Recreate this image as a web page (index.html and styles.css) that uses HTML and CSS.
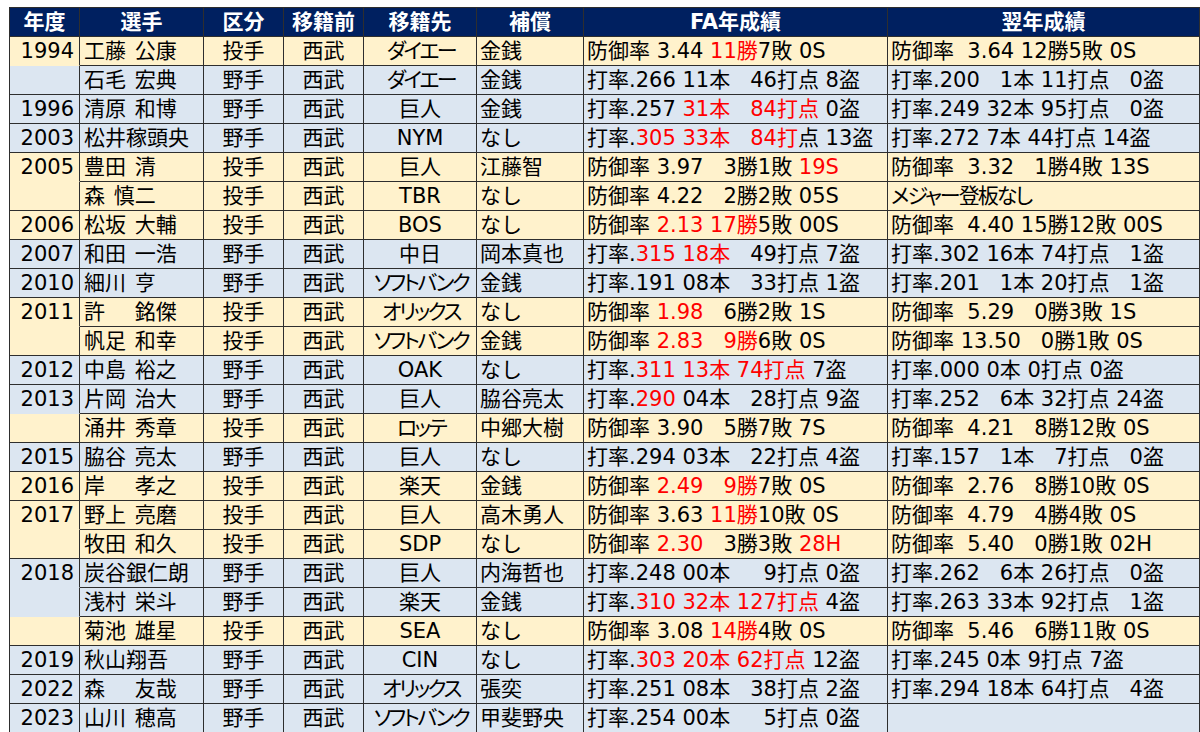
FILE: index.html
```html
<!DOCTYPE html>
<html lang="ja">
<head>
<meta charset="utf-8">
<title>西武 FA移籍選手一覧</title>
<link rel="stylesheet" href="styles.css">
</head>
<body>
<div class="sheet">
<div class="row head"><div class="cell">年度</div><div class="cell">選手</div><div class="cell">区分</div><div class="cell">移籍前</div><div class="cell">移籍先</div><div class="cell">補償</div><div class="cell">FA年成績</div><div class="cell">翌年成績</div></div>
<div class="row p"><div class="cell yr open">1994</div><div class="cell nm">工藤 公康</div><div class="cell ct">投手</div><div class="cell ct">西武</div><div class="cell ct kana">ダイエー</div><div class="cell">金銭</div><div class="cell">防御率 3.44 <span class="r">11勝</span>7敗 0S</div><div class="cell">防御率  3.64 12勝5敗 0S</div></div>
<div class="row b"><div class="cell yr"></div><div class="cell nm">石毛 宏典</div><div class="cell ct">野手</div><div class="cell ct">西武</div><div class="cell ct kana">ダイエー</div><div class="cell">金銭</div><div class="cell">打率.266 11本   46打点 8盗</div><div class="cell">打率.200   1本 11打点   0盗</div></div>
<div class="row b"><div class="cell yr">1996</div><div class="cell nm">清原 和博</div><div class="cell ct">野手</div><div class="cell ct">西武</div><div class="cell ct">巨人</div><div class="cell">金銭</div><div class="cell">打率.257 <span class="r">31本</span>   <span class="r">84打点</span> 0盗</div><div class="cell">打率.249 32本 95打点   0盗</div></div>
<div class="row b"><div class="cell yr">2003</div><div class="cell nm">松井稼頭央</div><div class="cell ct">野手</div><div class="cell ct">西武</div><div class="cell ct">NYM</div><div class="cell">なし</div><div class="cell">打率.<span class="r">305 33本</span>   <span class="r">84打</span>点 13盗</div><div class="cell">打率.272 7本 44打点 14盗</div></div>
<div class="row p"><div class="cell yr open">2005</div><div class="cell nm">豊田 清</div><div class="cell ct">投手</div><div class="cell ct">西武</div><div class="cell ct">巨人</div><div class="cell">江藤智</div><div class="cell">防御率 3.97   3勝1敗 <span class="r">19S</span></div><div class="cell">防御率  3.32   1勝4敗 13S</div></div>
<div class="row p"><div class="cell yr"></div><div class="cell nm">森 慎二</div><div class="cell ct">投手</div><div class="cell ct">西武</div><div class="cell ct">TBR</div><div class="cell">なし</div><div class="cell">防御率 4.22   2勝2敗 05S</div><div class="cell note">メジャー登板なし</div></div>
<div class="row p"><div class="cell yr">2006</div><div class="cell nm">松坂 大輔</div><div class="cell ct">投手</div><div class="cell ct">西武</div><div class="cell ct">BOS</div><div class="cell">なし</div><div class="cell">防御率 <span class="r">2.13 17勝</span>5敗 00S</div><div class="cell">防御率  4.40 15勝12敗 00S</div></div>
<div class="row b"><div class="cell yr">2007</div><div class="cell nm">和田 一浩</div><div class="cell ct">野手</div><div class="cell ct">西武</div><div class="cell ct">中日</div><div class="cell">岡本真也</div><div class="cell">打率.<span class="r">315 18本</span>   49打点 7盗</div><div class="cell">打率.302 16本 74打点   1盗</div></div>
<div class="row b"><div class="cell yr">2010</div><div class="cell nm">細川 亨</div><div class="cell ct">野手</div><div class="cell ct">西武</div><div class="cell ct kana">ソフトバンク</div><div class="cell">金銭</div><div class="cell">打率.191 08本   33打点 1盗</div><div class="cell">打率.201   1本 20打点   1盗</div></div>
<div class="row p"><div class="cell yr open">2011</div><div class="cell nm">許　 銘傑</div><div class="cell ct">投手</div><div class="cell ct">西武</div><div class="cell ct kana">オリックス</div><div class="cell">なし</div><div class="cell">防御率 <span class="r">1.98</span>   6勝2敗 1S</div><div class="cell">防御率  5.29   0勝3敗 1S</div></div>
<div class="row p"><div class="cell yr"></div><div class="cell nm">帆足 和幸</div><div class="cell ct">投手</div><div class="cell ct">西武</div><div class="cell ct kana">ソフトバンク</div><div class="cell">金銭</div><div class="cell">防御率 <span class="r">2.83</span>   <span class="r">9勝</span>6敗 0S</div><div class="cell">防御率 13.50   0勝1敗 0S</div></div>
<div class="row b"><div class="cell yr">2012</div><div class="cell nm">中島 裕之</div><div class="cell ct">野手</div><div class="cell ct">西武</div><div class="cell ct">OAK</div><div class="cell">なし</div><div class="cell">打率.<span class="r">311 13本 74打点</span> 7盗</div><div class="cell">打率.000 0本 0打点 0盗</div></div>
<div class="row b"><div class="cell yr open">2013</div><div class="cell nm">片岡 治大</div><div class="cell ct">野手</div><div class="cell ct">西武</div><div class="cell ct">巨人</div><div class="cell">脇谷亮太</div><div class="cell">打率.<span class="r">290</span> 04本   28打点 9盗</div><div class="cell">打率.252   6本 32打点 24盗</div></div>
<div class="row p"><div class="cell yr"></div><div class="cell nm">涌井 秀章</div><div class="cell ct">投手</div><div class="cell ct">西武</div><div class="cell ct kana">ロッテ</div><div class="cell">中郷大樹</div><div class="cell">防御率 3.90   5勝7敗 7S</div><div class="cell">防御率  4.21   8勝12敗 0S</div></div>
<div class="row b"><div class="cell yr">2015</div><div class="cell nm">脇谷 亮太</div><div class="cell ct">野手</div><div class="cell ct">西武</div><div class="cell ct">巨人</div><div class="cell">なし</div><div class="cell">打率.294 03本   22打点 4盗</div><div class="cell">打率.157   1本   7打点   0盗</div></div>
<div class="row p"><div class="cell yr">2016</div><div class="cell nm">岸　 孝之</div><div class="cell ct">投手</div><div class="cell ct">西武</div><div class="cell ct">楽天</div><div class="cell">金銭</div><div class="cell">防御率 <span class="r">2.49</span>   <span class="r">9勝</span>7敗 0S</div><div class="cell">防御率  2.76   8勝10敗 0S</div></div>
<div class="row p"><div class="cell yr open">2017</div><div class="cell nm">野上 亮磨</div><div class="cell ct">投手</div><div class="cell ct">西武</div><div class="cell ct">巨人</div><div class="cell">高木勇人</div><div class="cell">防御率 3.63 <span class="r">11勝</span>10敗 0S</div><div class="cell">防御率  4.79   4勝4敗 0S</div></div>
<div class="row p"><div class="cell yr"></div><div class="cell nm">牧田 和久</div><div class="cell ct">投手</div><div class="cell ct">西武</div><div class="cell ct">SDP</div><div class="cell">なし</div><div class="cell">防御率 <span class="r">2.30</span>   3勝3敗 <span class="r">28H</span></div><div class="cell">防御率  5.40   0勝1敗 02H</div></div>
<div class="row b"><div class="cell yr open">2018</div><div class="cell nm">炭谷銀仁朗</div><div class="cell ct">野手</div><div class="cell ct">西武</div><div class="cell ct">巨人</div><div class="cell">内海哲也</div><div class="cell">打率.248 00本     9打点 0盗</div><div class="cell">打率.262   6本 26打点   0盗</div></div>
<div class="row b"><div class="cell yr open"></div><div class="cell nm">浅村 栄斗</div><div class="cell ct">野手</div><div class="cell ct">西武</div><div class="cell ct">楽天</div><div class="cell">金銭</div><div class="cell">打率.<span class="r">310 32本 127打点</span> 4盗</div><div class="cell">打率.263 33本 92打点   1盗</div></div>
<div class="row p"><div class="cell yr"></div><div class="cell nm">菊池 雄星</div><div class="cell ct">投手</div><div class="cell ct">西武</div><div class="cell ct">SEA</div><div class="cell">なし</div><div class="cell">防御率 3.08 <span class="r">14勝</span>4敗 0S</div><div class="cell">防御率  5.46   6勝11敗 0S</div></div>
<div class="row b"><div class="cell yr">2019</div><div class="cell nm">秋山翔吾</div><div class="cell ct">野手</div><div class="cell ct">西武</div><div class="cell ct">CIN</div><div class="cell">なし</div><div class="cell">打率.<span class="r">303 20本 62打点</span> 12盗</div><div class="cell">打率.245 0本 9打点 7盗</div></div>
<div class="row b"><div class="cell yr">2022</div><div class="cell nm">森　 友哉</div><div class="cell ct">野手</div><div class="cell ct">西武</div><div class="cell ct kana">オリックス</div><div class="cell">張奕</div><div class="cell">打率.251 08本   38打点 2盗</div><div class="cell">打率.294 18本 64打点   4盗</div></div>
<div class="row b"><div class="cell yr">2023</div><div class="cell nm">山川 穂高</div><div class="cell ct">野手</div><div class="cell ct">西武</div><div class="cell ct kana">ソフトバンク</div><div class="cell">甲斐野央</div><div class="cell">打率.254 00本     5打点 0盗</div><div class="cell"></div></div>
</div>
</body>
</html>
```

FILE: styles.css
```css
* {
  box-sizing: border-box;
  margin: 0;
  padding: 0;
}

body {
  background: #ffffff;
  color: #000000;
  font-family: "DejaVu Sans", "Noto Sans CJK JP", sans-serif;
}

.sheet {
  display: grid;
  grid-template-columns: 70px 124px 80px 80px 113px 107px 304px 312px;
  width: 1191px;
  margin: 7px 0 0 9px;
  border-top: 1px solid #2e2e2e;
  border-left: 1px solid #2e2e2e;
}

.row {
  display: contents;
}

.cell {
  height: 29px;
  padding: 0 3px;
  border-right: 1px solid #2e2e2e;
  border-bottom: 1px solid #2e2e2e;
  font-size: 21px;
  line-height: 28px;
  white-space: pre;
  overflow: hidden;
}

.head .cell {
  background: #002060;
  color: #ffffff;
  font-weight: bold;
  text-align: center;
}

.p .cell {
  background: #fff2cc;
}

.b .cell {
  background: #dce6f1;
}

.yr {
  text-align: right;
  padding-right: 5px;
}

.open {
  border-bottom-color: transparent;
}

.ct {
  text-align: center;
}

.nm {
  padding-left: 4px;
  word-spacing: 2px;
}

.kana {
  font-feature-settings: "palt";
  letter-spacing: -2.5px;
  text-indent: 2px;
}

.note {
  font-feature-settings: "palt";
  letter-spacing: -2px;
}

.r {
  color: #ff0000;
}
```
